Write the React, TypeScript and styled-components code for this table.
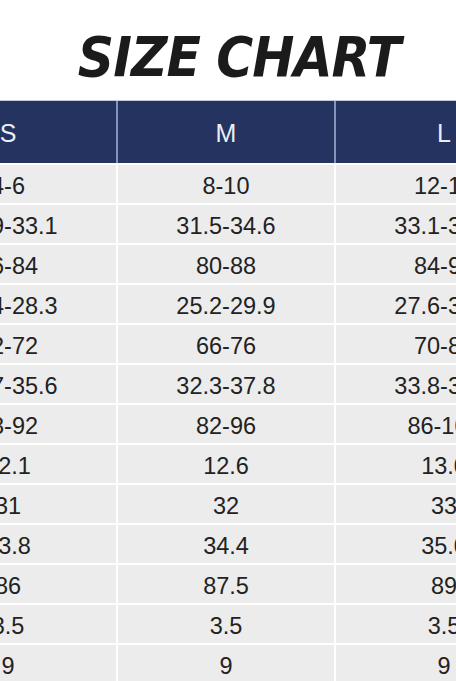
import styled, { createGlobalStyle } from 'styled-components';

const GlobalStyle = createGlobalStyle`
  html, body {
    margin: 0;
    padding: 0;
    background: #ffffff;
  }
`;

const Page = styled.div`
  width: 456px;
  height: 681px;
  overflow: hidden;
  background: #ffffff;
  font-family: 'Liberation Sans', Arial, sans-serif;
`;

const Title = styled.h1`
  margin: 0;
  padding: 28px 0 14px 22px;
  height: 58px;
  text-align: center;
  font-family: 'DejaVu Sans Condensed', 'DejaVu Sans', sans-serif;
  font-size: 56px;
  line-height: 58px;
  font-weight: 700;
  font-style: italic;
  letter-spacing: -1px;
  color: #1b1b1b;
`;

const Table = styled.div`
  width: 652px;
  margin-left: -100px;
  border-top: 1px solid #c3cbdc;
`;

const Grid = styled.div<{ $head?: boolean }>`
  display: grid;
  grid-template-columns: repeat(3, 216px);
  gap: 2px;
  padding-top: ${(p) => (p.$head ? 0 : 2)}px;
  background: ${(p) => (p.$head ? '#8494b8' : '#ffffff')};
`;

const HeadCell = styled.div`
  height: 62px;
  box-sizing: border-box;
  padding-top: 3px;
  display: flex;
  align-items: center;
  justify-content: center;
  background: #24335f;
  color: #e9edf5;
  font-size: 25px;
`;

const Cell = styled.div`
  height: 38px;
  box-sizing: border-box;
  padding-top: 4px;
  display: flex;
  align-items: center;
  justify-content: center;
  background: #ececec;
  color: #222222;
  font-size: 23.5px;
`;

const sizes = ['S', 'M', 'L'];

const rows: string[][] = [
  ['4-6', '8-10', '12-14'],
  ['29.9-33.1', '31.5-34.6', '33.1-36.2'],
  ['76-84', '80-88', '84-92'],
  ['23.4-28.3', '25.2-29.9', '27.6-31.5'],
  ['62-72', '66-76', '70-80'],
  ['30.7-35.6', '32.3-37.8', '33.8-39.4'],
  ['78-92', '82-96', '86-100'],
  ['12.1', '12.6', '13.0'],
  ['31', '32', '33'],
  ['33.8', '34.4', '35.0'],
  ['86', '87.5', '89'],
  ['3.5', '3.5', '3.5'],
  ['9', '9', '9'],
];

const App = () => {
  return (
    <Page>
      <GlobalStyle />
      <Title>SIZE CHART</Title>
      <Table>
        <Grid $head>
          {sizes.map((s) => (
            <HeadCell key={s}>{s}</HeadCell>
          ))}
        </Grid>
        <Grid>
          {rows.map((row, i) =>
            row.map((v, j) => <Cell key={`${i}-${j}`}>{v}</Cell>)
          )}
        </Grid>
      </Table>
    </Page>
  );
};

export default App;
